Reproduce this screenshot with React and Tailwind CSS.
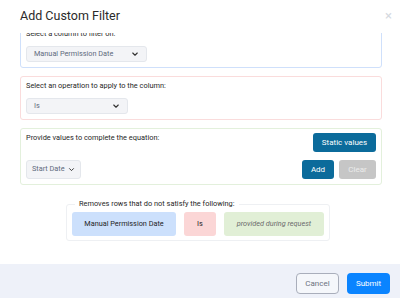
import React from "react";

function ChevronDown({ className }) {
  return (
    <svg viewBox="0 0 16 16" className={className} fill="none" stroke="currentColor" strokeWidth="2.2" strokeLinecap="round" strokeLinejoin="round">
      <path d="M3.5 6l4.5 4.5L12.5 6" />
    </svg>
  );
}

function Select({ label, width }) {
  return (
    <div
      className={`flex items-center justify-between ${width} h-[16px] px-[7px] rounded-[3px] bg-[#f3f4f7] border border-[#e4e7ec] text-[7.3px] text-[#5f6b7d]`}
    >
      <span>{label}</span>
      <ChevronDown className="w-[8px] h-[8px] text-[#333]" />
    </div>
  );
}

export default function App() {
  return (
    <div
      className="w-[400px] h-[298px] bg-white flex flex-col overflow-hidden text-[#1f1f1f]"
      style={{ fontFamily: "Roboto, 'Liberation Sans', sans-serif" }}
    >
      {/* Header */}
      <header className="h-[33px] flex items-start justify-between pl-[20px] pr-[8px] pt-[8px]">
        <h1 className="text-[12.5px] leading-[16px] text-[#2a2a2a]">Add Custom Filter</h1>
        <span className="text-[13px] leading-[12px] mt-[2px] text-[#d5d9e0]">×</span>
      </header>

      {/* Body (scrolled) */}
      <main className="flex-1 overflow-hidden pl-[20px] pr-[18px]">
        <div className="flex flex-col gap-[8px] -mt-[9px]">
          {/* Column */}
          <section className="border border-[#cfe0fb] rounded-[3px] px-[5px] pt-[4px] pb-[5px] flex flex-col gap-[7px]">
            <p className="text-[7.4px] leading-[10px]">Select a column to filter on:</p>
            <Select label="Manual Permission Date" width="w-[121px]" />
          </section>

          {/* Operation */}
          <section className="border border-[#fadcdc] rounded-[3px] px-[5px] pt-[4px] pb-[5px] flex flex-col gap-[7px]">
            <p className="text-[7.4px] leading-[10px]">Select an operation to apply to the column:</p>
            <Select label="Is" width="w-[102px]" />
          </section>

          {/* Values */}
          <section className="border border-[#e3f0dc] rounded-[3px] pl-[5px] pr-[5px] pt-[4px] pb-[5px] flex flex-col gap-[8px]">
            <div className="flex items-start justify-between">
              <p className="text-[7.4px] leading-[10px]">Provide values to complete the equation:</p>
              <button className="h-[19px] w-[63px] rounded-[3px] bg-[#0b6b9b] text-white text-[8px]">
                Static values
              </button>
            </div>
            <div className="flex items-center justify-between">
              <div className="flex items-center gap-[3px] h-[19px] px-[5px] rounded-[3px] bg-[#f3f4f7] border border-[#e4e7ec] text-[7.3px] text-[#5f6b7d]">
                <span>Start Date</span>
                <ChevronDown className="w-[7px] h-[7px] text-[#333]" />
              </div>
              <div className="flex gap-[5px]">
                <button className="h-[19px] w-[32px] rounded-[3px] bg-[#0b6b9b] text-white text-[8px]">Add</button>
                <button className="h-[19px] w-[37px] rounded-[3px] bg-[#c6c6c6] text-[#ececec] text-[8px]">Clear</button>
              </div>
            </div>
          </section>

          {/* Summary */}
          <fieldset className="self-center ml-[-6px] mt-[6px] w-[264px] border border-[#eef0f3] rounded-[3px] px-[5px] pb-[4px]">
            <legend className="ml-[3px] px-[4px] text-[7.4px] leading-[10px]">
              Removes rows that do not satisfy the following:
            </legend>
            <div className="flex gap-[8px] mt-[3px]">
              <div className="w-[104px] h-[24px] rounded-[3px] bg-[#cce0fc] flex items-center justify-center text-[7.3px]">
                Manual Permission Date
              </div>
              <div className="w-[32px] h-[24px] rounded-[3px] bg-[#fbd6d6] flex items-center justify-center text-[7.3px]">
                Is
              </div>
              <div className="flex-1 h-[24px] rounded-[3px] bg-[#e1efd6] flex items-center justify-center text-[7.3px] italic text-[#6b6b6b]">
                provided during request
              </div>
            </div>
          </fieldset>
        </div>
      </main>

      {/* Footer */}
      <footer className="h-[34px] bg-[#eef1f9] flex items-start justify-end gap-[8px] pr-[10px] pt-[9px]">
        <button className="h-[21px] w-[43px] rounded-[4px] border border-[#a9aebb] text-[8px] text-[#6c7280] bg-[#f5f7fb]">
          Cancel
        </button>
        <button className="h-[21px] w-[43px] rounded-[4px] bg-[#0a84ff] text-white text-[8px]">
          Submit
        </button>
      </footer>
    </div>
  );
}
